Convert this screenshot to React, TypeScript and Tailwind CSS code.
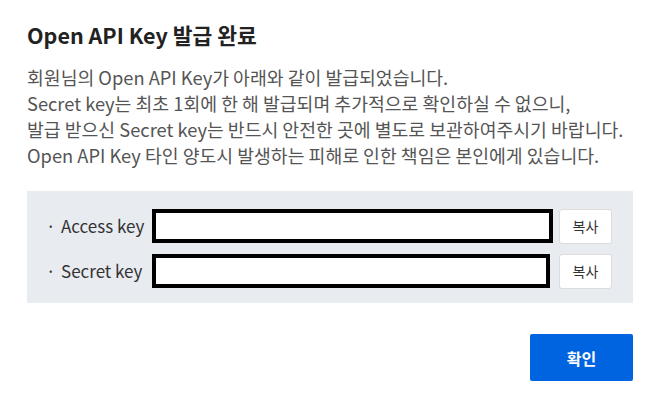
import React from 'react';

const font = { fontFamily: '"Noto Sans CJK KR", "Noto Sans", sans-serif' };

interface KeyRowProps {
  label: string;
  boxWidth: string;
}

const KeyRow: React.FC<KeyRowProps> = ({ label, boxWidth }) => {
  return (
    <div className="flex items-start">
      <div className="flex h-[34px] w-[104px] items-center text-[17px] text-[#333]">
        <span className="w-[13px] -ml-[2px]">·</span>
        <span className="ml-[2px]">{label}</span>
      </div>
      {/* key value is masked out with a black box */}
      <div className={`h-[34px] ${boxWidth} border-[4px] border-black bg-white`} />
      <button className="ml-auto h-[35px] w-[53px] rounded-[3px] border border-[#dcdcdc] bg-white text-[14px] text-[#333]">
        복사
      </button>
    </div>
  );
};

export default function App() {
  return (
    <div className="h-[412px] w-[662px] bg-white pl-[27px] pr-[29px] pt-[21px]" style={font}>
      <h1 className="text-[21.5px] font-bold leading-[28px] text-[#222]">Open API Key 발급 완료</h1>

      <div className="mt-[15px] text-[18.3px] leading-[26px] text-[#555]">
        <p>회원님의 Open API Key가 아래와 같이 발급되었습니다.</p>
        <p>Secret key는 최초 1회에 한 해 발급되며 추가적으로 확인하실 수 없으니,</p>
        <p>발급 받으신 Secret key는 반드시 안전한 곳에 별도로 보관하여주시기 바랍니다.</p>
        <p>Open API Key 타인 양도시 발생하는 피해로 인한 책임은 본인에게 있습니다.</p>
      </div>

      <div className="mt-[23px] flex flex-col gap-[10px] bg-[#e8ebf0] pb-[14px] pl-[21px] pr-[21px] pt-[18px]">
        <KeyRow label="Access key" boxWidth="w-[401px]" />
        <KeyRow label="Secret key" boxWidth="w-[398px]" />
      </div>

      <div className="mt-[31px] flex justify-end">
        <button className="h-[47px] w-[103px] rounded-[2px] bg-[#0064e0] text-[16px] font-bold text-white">
          확인
        </button>
      </div>
    </div>
  );
}
